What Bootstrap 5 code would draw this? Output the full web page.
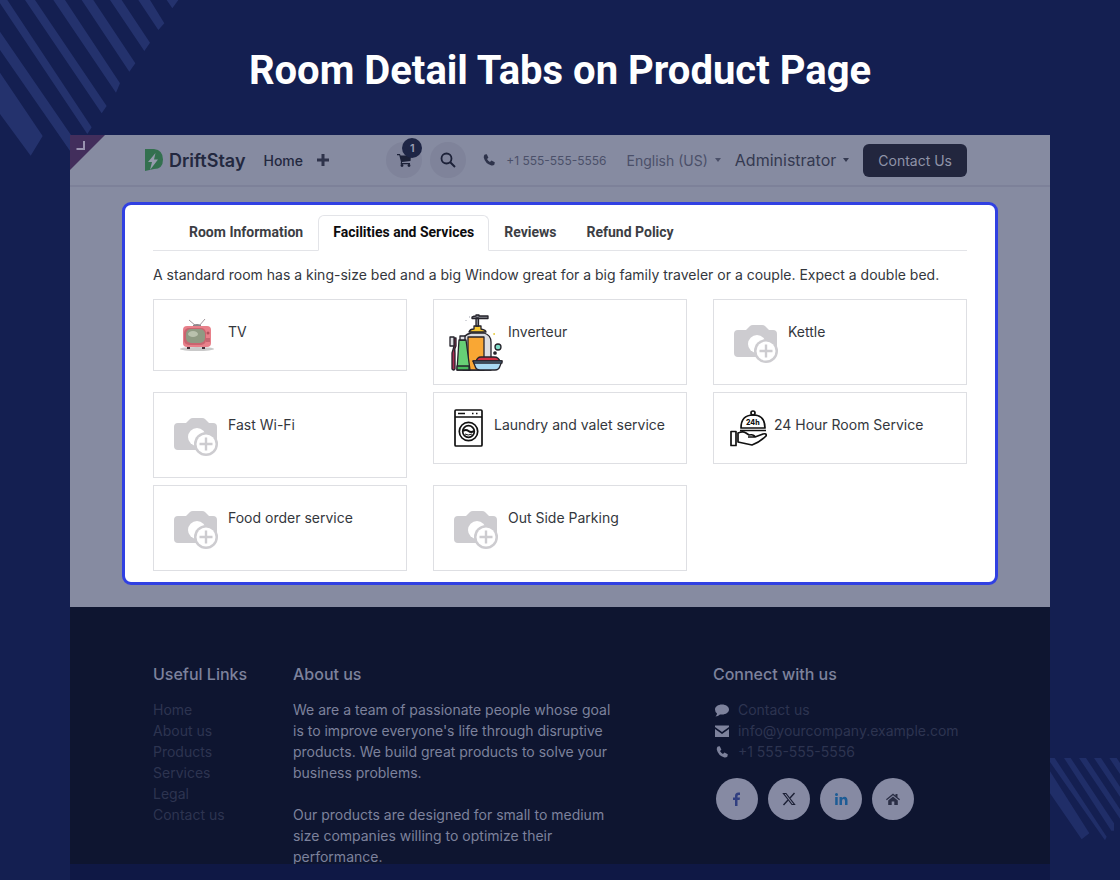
<!DOCTYPE html>
<html lang="en">
<head>
<meta charset="utf-8">
<meta name="viewport" content="width=device-width, initial-scale=1">
<title>Room Detail Tabs on Product Page</title>
<link href="https://cdn.jsdelivr.net/npm/bootstrap@5.3.0/dist/css/bootstrap.min.css" rel="stylesheet">
<style>
  body { background: #141f51; font-family: Inter, "Liberation Sans", sans-serif; font-size: 14px; line-height: 21px; color: #34373d; min-height: 100vh; }
  a { text-decoration: none; }
  .stage { min-height: 100vh; }
  .stripes { position: absolute; fill: #24326d; }
  .stripes-top { top: 0; left: 0; }
  .stripes-side { top: 758px; right: 0; fill: #202e68; }
  .hero-title { font: 700 40px/48px Roboto, sans-serif; color: #fff; padding: 47px 0 40px; }
  .shop { margin: 0 70px; background: #868ba1; }
  .corner { position: absolute; top: 0; left: 0; }
  .topbar { height: 52px; padding: 0 83px 0 75px; border-bottom: 2px solid #7d8199; }
  .brand { font-size: 18px; font-weight: 600; gap: 6px; }
  .topbar .btn-link, .topbar a { color: #23283f; }
  .home-link { font-weight: 500; margin: 0 14px 0 18px; }
  .round-btn { width: 36px; height: 36px; border: 0; border-radius: 50%; background: #7f839a; color: #1c2138; padding: 0; display: flex; align-items: center; justify-content: center; }
  .cart-count { position: absolute; top: -4px; right: 0; width: 20px; height: 20px; border-radius: 50%; background: #1e2545; color: #9a9fb3; font-size: 11px; font-weight: 600; line-height: 20px; }
  .tel { font-size: 12px; gap: 10px; margin: 0 20px 0 16px; }
  .topbar .tel, .topbar .lang { color: #4b5069; }
  .topbar .admin { color: #343950; font-size: 16px; }
  .pick { border: 0; background: none; padding: 0; gap: 7px; display: flex; align-items: center; margin-right: 14px; }
  .pick::after { margin: 0; border-top-width: 4px; border-left-width: 3px; border-right-width: 3px; }
  .contact-btn, .contact-btn:hover { background: #22263e; color: #8f93a8; font-size: 14px; line-height: 21px; padding: 6px 15px; border: 0; border-radius: 6px; }
  .room { margin: 15px 52px 22px; border: 3px solid #3040e2; border-radius: 9px; background: #fff; padding: 10px 28px 11px; }
  .room .nav-tabs { padding-left: 21px; border-color: #e3e4e8; }
  .room .nav-link { font: 700 14px/21px Roboto, sans-serif; color: #3c3e44; padding: 6px 14px 7px; border-radius: 6px 6px 0 0; }
  .room .nav-link.active { color: #0c0c0e; border-color: #e3e4e8 #e3e4e8 #fff; }
  .about-room { margin: 13px 0 14px; }
  .grid26 { --bs-gutter-x: 26px; --bs-gutter-y: 7px; }
  .facility { border: 1px solid #dedfe3; padding: 10px; }
  .facility span { padding-top: 11px; }
  .foot { background: #0e1530; color: #7d829c; padding: 64px 83px 0; }
  .foot h2 { font-size: 16px; line-height: 21px; font-weight: 500; margin-bottom: 14px; color: #7d829c; }
  .foot li a { color: #2d3450; }
  .foot li svg { width: 18px; margin-right: 7px; fill: #7d829c; }
  .socials { gap: 10px; margin-top: 16px; padding-left: 3px; }
  .social { width: 42px; height: 42px; border-radius: 50%; background: #868aa3; display: flex; align-items: center; justify-content: center; }
  .base { background: #0f1845; height: 16px; margin: -3px 70px 0; position: relative; }
</style>
</head>
<body>
<svg width="0" height="0" class="d-none" aria-hidden="true">
  <symbol id="camera" viewBox="0 0 64 64">
    <path fill="#cdccd0" d="M14 20h8l4-4q1-1 3-1h9q2 0 3 1l4 4h4q4 0 4 4v19q0 4-4 4H14q-4 0-4-4V24q0-4 4-4z"/>
    <circle cx="33" cy="34" r="9" fill="#fff"/>
    <circle cx="42" cy="41" r="12" fill="#cdccd0"/>
    <circle cx="42" cy="41" r="9.500" fill="#fff"/>
    <path stroke="#cdccd0" stroke-width="2.400" d="M42 34.500v13M35.500 41h13"/>
  </symbol>
  <symbol id="phone" viewBox="0 0 16 16">
    <path d="M3.200 1.800 5.500 1.500l1.800 3.800-1.600 1.600q1.200 2.300 3.400 3.500l1.700-1.700 3.800 1.900-.4 2.400q-1.200 1.500-3.400 1.200Q3.600 12 2 5q-.2-2.200 1.200-3.200z"/>
  </symbol>
</svg>
<div class="stage position-relative overflow-hidden">
  <svg class="stripes stripes-top" width="180" height="160" viewBox="0 0 540 480" aria-hidden="true">
    <path d="M0 218 128 408 92 467 0 342zM0 95 230 430 215 460 0 150zM0 0H22L275 382 262 402 0 10zM75 0H105L320 318 305 340zM160 0H195L360 250 348 278zM245 0H280L406 190 388 215zM330 0H365L450 128 433 153zM415 0H450L493 70 475 90zM500 0H535L517 25z"/>
  </svg>
  <svg class="stripes stripes-side" width="70" height="84" viewBox="0 0 210 252" aria-hidden="true">
    <path d="M0 40 118 226 95 244 0 106zM0 0H14L170 236 165 247 0 12zM42 0H62L192 196V218H184zM87 0H108L210 154V182zM132 0H153L210 86V116zM178 0H200L210 15V48z"/>
  </svg>

  <h1 class="hero-title text-center m-0">Room Detail Tabs on Product Page</h1>

  <div class="shop position-relative">
    <svg class="corner" width="35" height="35" viewBox="0 0 35 35" aria-hidden="true"><path fill="#422e5c" d="M0 0h35L0 35z"/><path fill="none" stroke="#9a93b0" stroke-width="2" d="M14 6v8H6.500"/></svg>

    <header class="topbar d-flex align-items-center">
      <a class="brand d-flex align-items-center" href="#">
        <svg width="18" height="22" viewBox="0 0 18 22" aria-hidden="true"><path fill="#33704f" d="M0 0h9q9 1 9 10.500T9 20l-9 2z"/><path fill="#959bad" d="M10.500 4 3 13h4l-2 8 8-10.500H9z"/></svg>
        DriftStay
      </a>
      <a class="home-link" href="#">Home</a>
      <button class="btn btn-link p-0 border-0 d-flex" aria-label="Add page"><svg width="12" height="12" viewBox="0 0 12 12"><path stroke="#2e334b" stroke-width="3" d="M6 0v12M0 6h12"/></svg></button>
      <div class="d-flex align-items-center ms-auto">
        <button class="round-btn position-relative" aria-label="Cart">
          <svg width="15" height="14" viewBox="0 0 15 14"><path fill="currentColor" d="M0 1h3l.5 1.500H14L13.500 8 5 9v1h8v1.300H3.600L4 9 2.300 2.300H0z"/><circle cx="5" cy="12.500" r="1.400" fill="currentColor"/><circle cx="12" cy="12.500" r="1.400" fill="currentColor"/></svg>
          <span class="cart-count">1</span>
        </button>
        <button class="round-btn ms-2" aria-label="Search"><svg width="16" height="16" viewBox="0 0 16 16" fill="none" stroke="currentColor"><circle cx="6.500" cy="6.500" r="5" stroke-width="1.800"/><path stroke-width="2" d="m10 10 5 5"/></svg></button>
        <a class="tel d-flex align-items-center" href="#"><svg width="14" height="14" fill="#2e334b"><use href="#phone"/></svg>+1 555-555-5556</a>
        <button class="pick lang dropdown-toggle">English (US)</button>
        <button class="pick admin dropdown-toggle">Administrator</button>
        <button class="btn contact-btn">Contact Us</button>
      </div>
    </header>

    <div class="overflow-hidden">
    <main class="room">
      <ul class="nav nav-tabs">
        <li class="nav-item"><a class="nav-link" href="#">Room Information</a></li>
        <li class="nav-item"><a class="nav-link active" href="#" aria-current="page">Facilities and Services</a></li>
        <li class="nav-item"><a class="nav-link" href="#">Reviews</a></li>
        <li class="nav-item"><a class="nav-link" href="#">Refund Policy</a></li>
      </ul>
      <p class="about-room">A standard room has a king-size bed and a big Window great for a big family traveler or a couple. Expect a double bed.</p>
      <div class="row grid26 align-items-start">
        <div class="col-4"><div class="facility d-flex">
          <svg width="64" height="50" viewBox="0 0 64 50" aria-hidden="true"><ellipse cx="33" cy="39" rx="17" ry="2" fill="#c9c9c9"/><path fill="none" stroke="#a1979c" stroke-width="1" d="m25 10 7 6h3l6-7"/><path fill="#8d858a" d="M29 15q4-2 8 0v2h-8z"/><path fill="#45303a" d="M23 36h3v3h-3zM38 36h3v3h-3z"/><rect x="19" y="16" width="28" height="21" rx="4" fill="#e8808a"/><rect x="20" y="18" width="22" height="17" rx="5" fill="#c96470"/><rect x="22" y="19" width="19" height="14" rx="5" fill="#8f9a83"/><ellipse cx="29" cy="24" rx="5" ry="3" fill="#b9c1ad"/><circle cx="44" cy="23" r="1.500" fill="#b0525c"/><path stroke="#a34c58" d="M42 29h4m-4 2h4"/></svg>
          <span>TV</span></div></div>
        <div class="col-4"><div class="facility d-flex">
          <svg width="64" height="64" viewBox="0 0 64 64" fill="none" stroke="#25232b" stroke-width="1.300" stroke-linejoin="round" aria-hidden="true">
            <g transform="translate(-1)">
            <path fill="#dcdde1" d="M20 60V31q0-6 8-8h13q7 2 7 9v28z"/>
            <path fill="#f9a734" d="M25 27h16v33H25z"/>
            <path fill="#f6c62f" d="M26 22q1-3 5-3v-3h7v3q5 1 5 3z"/>
            <path fill="#8b8e96" d="M33 8h2.500v8H33zM29 7q2-1 4-1V5h3v1h9v2.500H29z"/>
            <path fill="#67cf76" d="M16 30h7l4 30H14z"/><path fill="#49b95d" d="M14 56h12v4H14z"/><path fill="#dfe0e4" d="M17 26h5v4h-5z"/>
            <path fill="#a92b51" d="M11 28h2v8q-2 3-1 7v16q-1 2-3 0V43q1-3 2-7z"/><path fill="#dfe0e4" d="M7 27h4v9H7z"/>
            <path fill="#d42f42" d="M33 52q1-5 5-5h13q5 0 6 5z"/><path fill="#a9d9f2" d="M30 51h29l-2 5q-1 4-5 4H37q-4 0-5-4z"/><path fill="#7cc6ea" d="M30 51h29v2H31z"/>
            <circle cx="55" cy="37" r="3" fill="#7eddc9"/><circle cx="52" cy="43" r="1.200" fill="#25232b"/>
            <path stroke="#e9cf4e" d="M51 23v2m0-1h1"/><path stroke="#bfc0c8" d="M23 10v1m3-4h1"/>
            </g>
          </svg>
          <span>Inverteur</span></div></div>
        <div class="col-4"><div class="facility d-flex"><svg width="64" height="64" aria-hidden="true"><use href="#camera"/></svg><span>Kettle</span></div></div>
        <div class="col-4"><div class="facility d-flex"><svg width="64" height="64" aria-hidden="true"><use href="#camera"/></svg><span>Fast Wi-Fi</span></div></div>
        <div class="col-4"><div class="facility d-flex">
          <svg width="50" height="50" viewBox="0 0 50 50" fill="none" stroke="#111" stroke-width="1.700" aria-hidden="true"><rect x="11" y="7" width="27" height="36" rx="1"/><path d="M11 14h27M14 10.500h7M28 10.500h1.500M32 10.500h1.500"/><circle cx="24.500" cy="28.500" r="9.200"/><circle cx="24.500" cy="28.500" r="5.800"/><path stroke-width="2" d="M19 28q3-2 5.500 0t5.500 0"/><path stroke-width="1" d="M21 31q3 2 7 0"/></svg>
          <span>Laundry and valet service</span></div></div>
        <div class="col-4"><div class="facility d-flex">
          <svg width="50" height="50" viewBox="0 0 50 50" fill="none" stroke="#111" stroke-width="1.700" stroke-linejoin="round" aria-hidden="true"><circle cx="29" cy="10" r="2"/><path d="M17 25q0-13 12-13t12 13zM16 27.500h26M7 28.500h5v14H7zM14 30q5-2 8 0l3 2q5-1 6 2l8-3q4-1 3 2-6 6-14 9l-14-3zM24 34h7"/><text x="22" y="22" fill="#111" stroke="none" font-family="Inter" font-weight="800" font-size="7">24h</text></svg>
          <span>24 Hour Room Service</span></div></div>
        <div class="col-4"><div class="facility d-flex"><svg width="64" height="64" aria-hidden="true"><use href="#camera"/></svg><span>Food order service</span></div></div>
        <div class="col-4"><div class="facility d-flex"><svg width="64" height="64" aria-hidden="true"><use href="#camera"/></svg><span>Out Side Parking</span></div></div>
      </div>
    </main>
    </div>

    <footer class="foot">
      <div class="row grid26">
        <div class="col-2 mt-0">
          <h2>Useful Links</h2>
          <ul class="list-unstyled mb-0"><li><a href="#">Home</a></li><li><a href="#">About us</a></li><li><a href="#">Products</a></li><li><a href="#">Services</a></li><li><a href="#">Legal</a></li><li><a href="#">Contact us</a></li></ul>
        </div>
        <div class="col-5 mt-0">
          <h2>About us</h2>
          <p class="mb-0">We are a team of passionate people whose goal is to improve everyone's life through disruptive products. We build great products to solve your business problems.<br><br>Our products are designed for small to medium size companies willing to optimize their performance.</p>
        </div>
        <div class="col-4 offset-1 mt-0">
          <h2>Connect with us</h2>
          <ul class="list-unstyled mb-0">
            <li class="d-flex align-items-center"><svg height="14" viewBox="0 0 18 14"><path d="M9 1.500c4 0 7 2.200 7 5s-3 5-7 5l-2-.1Q5 13.500 2.500 13.500 4 12 4 10.500 2 9 2 6.500c0-2.800 3-5 7-5z"/></svg><a href="#">Contact us</a></li>
            <li class="d-flex align-items-center"><svg height="14" viewBox="0 0 18 14"><path d="M2 1.500h14v1.500L9 8 2 3zM2 5l7 5 7-5v8H2z"/></svg><a href="#">info@yourcompany.example.com</a></li>
            <li class="d-flex align-items-center"><svg height="14"><use href="#phone"/></svg><a href="#">+1 555-555-5556</a></li>
          </ul>
          <div class="socials d-flex">
            <a class="social" href="#" aria-label="Facebook"><svg width="14" height="14" viewBox="0 0 14 14"><path fill="#313f80" d="M5 14V8H3V5.500h2V4q0-3.500 3.500-3.500H10V3H8.800Q7.500 3 7.500 4.200v1.300H10L9.600 8H7.500v6z"/></svg></a>
            <a class="social" href="#" aria-label="X"><svg width="14" height="14" viewBox="0 0 14 14" fill="none" stroke="#1c2036"><path stroke-width="1.200" d="M1.500 1.500H4l8.500 11H10z"/><path stroke-width="1.400" d="M12.500 1 8 6M6 8l-4.500 5"/></svg></a>
            <a class="social" href="#" aria-label="LinkedIn"><svg width="14" height="14" viewBox="0 0 14 14" fill="#1d5c95"><circle cx="2.500" cy="2.500" r="1.500"/><path d="M1.200 5h2.500v8H1.200zM5.500 5h2.400v1q3-2.500 5 0 .6 1 .6 2.500V13H11V9q0-2-1.500-2T8 9v4H5.500z"/></svg></a>
            <a class="social" href="#" aria-label="Home"><svg width="14" height="14" viewBox="0 0 14 14" fill="#2a2e45"><path d="m7 1.500 2.500 2V2h2v3.200L14 7.300l-.8.900L7 3.200.8 8.200 0 7.300z"/><path d="m7 4.500 4.800 4V13H8.300V9.500H5.700V13H2.200V8.500z"/></svg></a>
          </div>
        </div>
      </div>
    </footer>
  </div>
  <div class="base"></div>
</div>
<script src="https://cdn.jsdelivr.net/npm/bootstrap@5.3.0/dist/js/bootstrap.bundle.min.js"></script>
</body>
</html>
